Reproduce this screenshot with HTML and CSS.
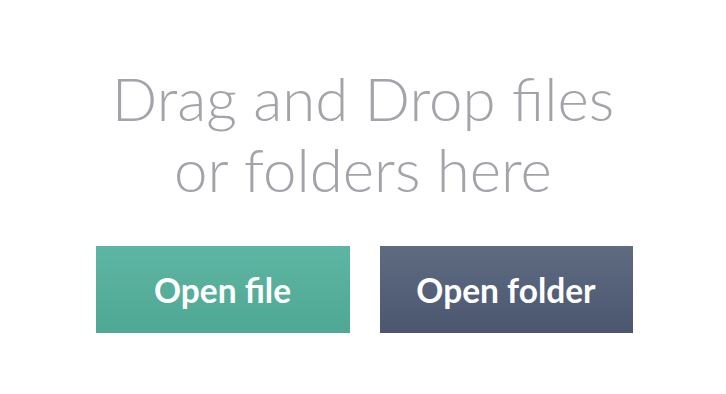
FILE: index.html
```html
<!DOCTYPE html>
<html>
<head>
<meta charset="utf-8">
<link rel="stylesheet" href="styles.css">
</head>
<body>
<main class="drop">
  <h1 class="title">Drag and Drop files<br>or folders here</h1>
  <div class="actions">
    <button class="btn btn-file">Open file</button>
    <button class="btn btn-folder">Open folder</button>
  </div>
</main>
</body>
</html>
```
FILE: styles.css
```css
html, body {
  margin: 0;
  padding: 0;
  background: #ffffff;
}
.drop {
  display: flex;
  flex-direction: column;
  align-items: center;
  font-family: Lato, "Open Sans", sans-serif;
}
.title {
  margin: 63px 0 0;
  font-weight: 300;
  font-size: 60px;
  line-height: 71px;
  color: #a2a4a9;
  text-align: center;
}
.actions {
  display: flex;
  gap: 30px;
  margin-top: 41px;
  margin-left: 2px;
}
.btn {
  width: 254px;
  height: 87px;
  border: none;
  padding: 0;
  font-family: Lato, sans-serif;
  font-weight: 700;
  font-size: 33.5px;
  color: #ffffff;
}
.btn-file {
  background: linear-gradient(#5db5a3, #4fa893);
}
.btn-folder {
  width: 253px;
  background: linear-gradient(#5f6b81, #4a576f);
}
```
